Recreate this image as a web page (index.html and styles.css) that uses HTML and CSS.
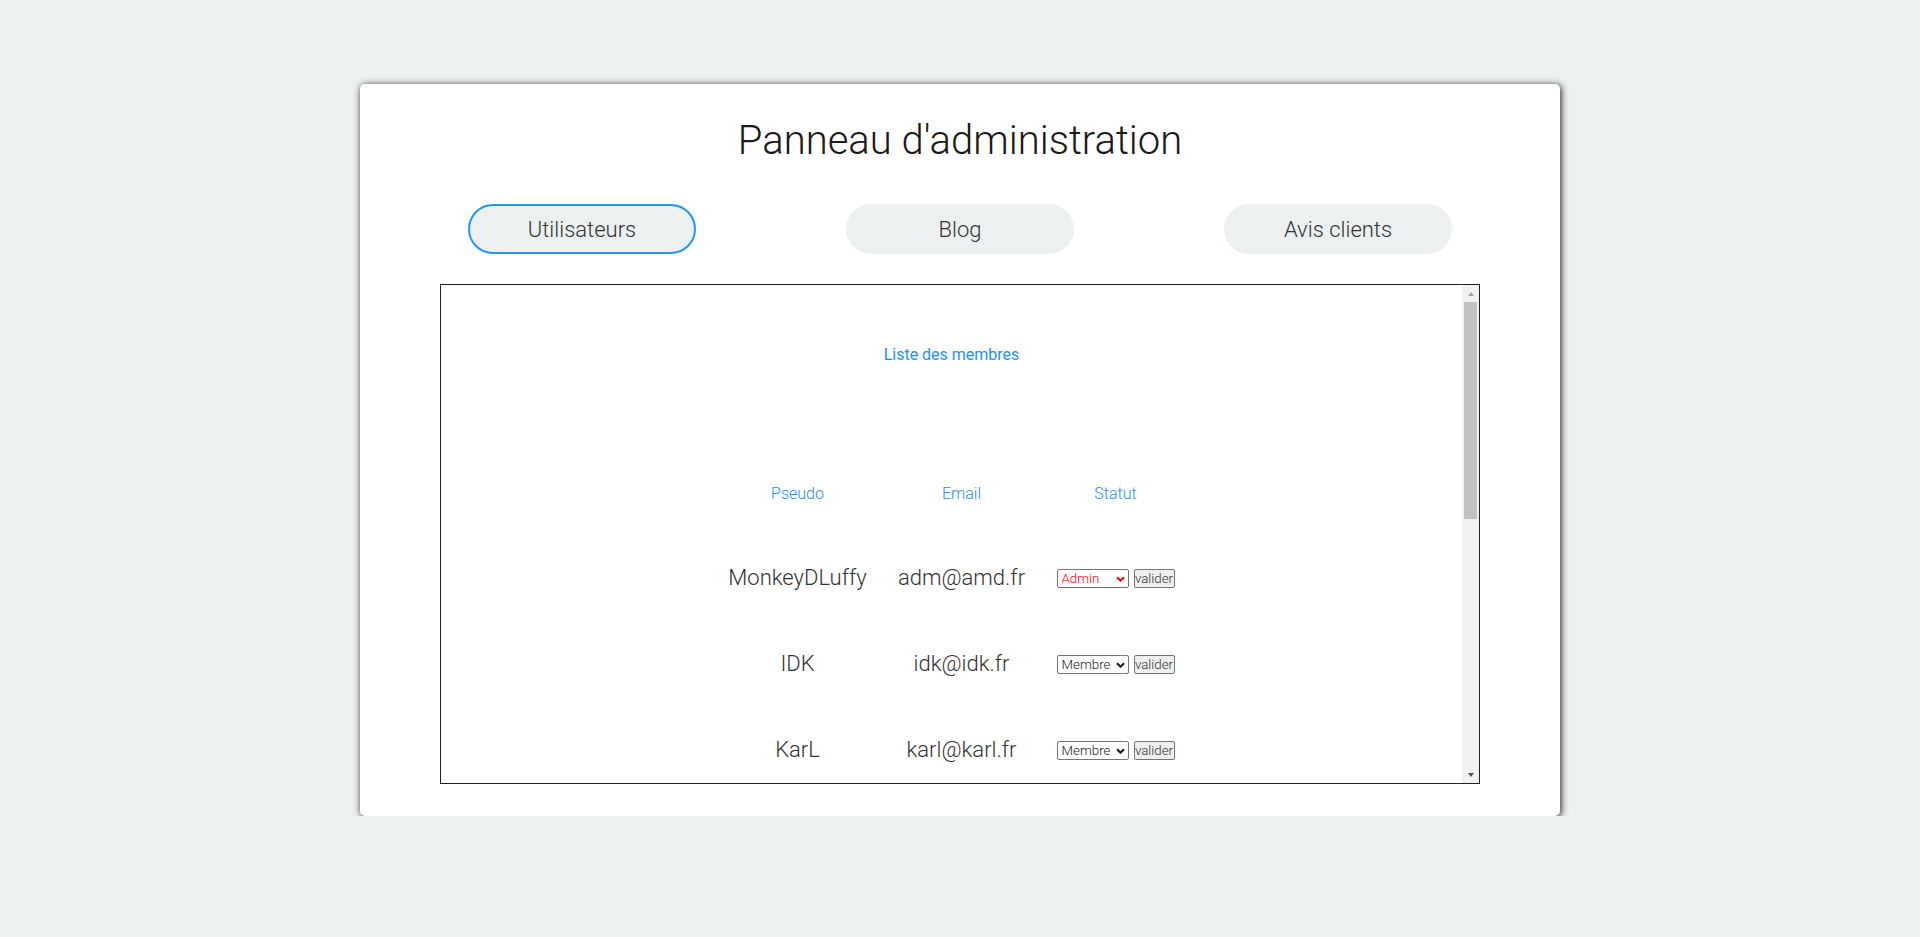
FILE: index.html
```html
<!DOCTYPE html>
<html lang="fr">
<head>
<meta charset="utf-8">
<title>Panneau d'administration</title>
<link rel="stylesheet" href="styles.css">
</head>
<body>
<div class="panel">
  <h1 class="panel-title">Panneau d'administration</h1>
  <nav class="tabs">
    <button class="tab tab-active">Utilisateurs</button>
    <button class="tab">Blog</button>
    <button class="tab">Avis clients</button>
  </nav>
  <div class="box">
    <div class="box-scroll">
      <p class="list-title">Liste des membres</p>
      <table class="members">
        <colgroup>
          <col class="col-pseudo">
          <col class="col-email">
          <col class="col-statut">
        </colgroup>
        <thead>
          <tr><th>Pseudo</th><th>Email</th><th>Statut</th></tr>
        </thead>
        <tbody>
          <tr>
            <td>MonkeyDLuffy</td>
            <td>adm@amd.fr</td>
            <td><form class="status"><span class="sel-wrap sel-admin"><select class="sel"><option>Admin</option><option>Membre</option></select><svg class="sel-arrow" viewBox="0 0 9 6"><path d="M1 1.2l3.5 3.5 3.5-3.5" fill="none" stroke="currentColor" stroke-width="2.1"/></svg></span><button type="button" class="validate">valider</button></form></td>
          </tr>
          <tr>
            <td>IDK</td>
            <td>idk@idk.fr</td>
            <td><form class="status"><span class="sel-wrap"><select class="sel"><option>Membre</option><option>Admin</option></select><svg class="sel-arrow" viewBox="0 0 9 6"><path d="M1 1.2l3.5 3.5 3.5-3.5" fill="none" stroke="currentColor" stroke-width="2.1"/></svg></span><button type="button" class="validate">valider</button></form></td>
          </tr>
          <tr>
            <td>KarL</td>
            <td>karl@karl.fr</td>
            <td><form class="status"><span class="sel-wrap"><select class="sel"><option>Membre</option><option>Admin</option></select><svg class="sel-arrow" viewBox="0 0 9 6"><path d="M1 1.2l3.5 3.5 3.5-3.5" fill="none" stroke="currentColor" stroke-width="2.1"/></svg></span><button type="button" class="validate">valider</button></form></td>
          </tr>
        </tbody>
      </table>
    </div>
    <div class="scrollbar" aria-hidden="true">
      <span class="sb-btn"><span class="sb-arrow-up"></span></span>
      <div class="sb-track"><span class="sb-thumb"></span></div>
      <span class="sb-btn"><span class="sb-arrow-down"></span></span>
    </div>
  </div>
</div>
</body>
</html>
```
FILE: styles.css
```css
* {
  box-sizing: border-box;
}

html, body {
  margin: 0;
  padding: 0;
}

body {
  background: #ecf0f1;
  font-family: Roboto, "Liberation Sans", sans-serif;
  padding-top: 84px;
}

.panel {
  width: 1200px;
  margin: 0 auto;
  background: #ffffff;
  border-radius: 5px;
  box-shadow: 1px 1px 7px rgba(0, 0, 0, 0.9);
  padding: 32px 80px 32px;
}

.panel-title {
  margin: 0;
  font-family: Roboto, "Liberation Sans", sans-serif;
  font-weight: 300;
  font-size: 40px;
  line-height: 49px;
  text-align: center;
  color: #1a1a1a;
}

.tabs {
  display: flex;
  justify-content: space-around;
  margin: 39px -47px 0;
}

.tab {
  width: 228px;
  height: 50px;
  border-radius: 25px;
  border: 2px solid transparent;
  background: #ecf0f1;
  font-family: Roboto, "Liberation Sans", sans-serif;
  font-weight: 300;
  font-size: 22px;
  color: #333;
  padding: 0;
  cursor: pointer;
}

.tab-active {
  border-color: #2196f3;
}

.box {
  display: flex;
  margin-top: 30px;
  width: 1040px;
  height: 500px;
  border: 1px solid #222;
}

.box-scroll {
  flex: 1;
  min-width: 0;
  overflow-y: auto;
  scrollbar-width: none;
}

.scrollbar {
  width: 17px;
  flex: none;
  display: flex;
  flex-direction: column;
  background: #f1f1f1;
}

.sb-btn {
  height: 17px;
  flex: none;
  display: flex;
  align-items: center;
  justify-content: center;
}

.sb-arrow-up {
  width: 0;
  height: 0;
  border-left: 3.5px solid transparent;
  border-right: 3.5px solid transparent;
  border-bottom: 4px solid #a3a3a3;
}

.sb-arrow-down {
  width: 0;
  height: 0;
  border-left: 3.5px solid transparent;
  border-right: 3.5px solid transparent;
  border-top: 4px solid #505050;
}

.sb-track {
  flex: 1;
  padding: 0 2px;
}

.sb-thumb {
  display: block;
  height: 217px;
  background: #c1c1c1;
}

.list-title {
  margin: 0;
  padding-top: 60px;
  font-size: 16px;
  line-height: 19px;
  font-weight: 400;
  color: #1e90ff;
  text-align: center;
}

.members {
  margin: 88px auto 0;
  width: 477px;
  table-layout: fixed;
  border-collapse: collapse;
}

.col-pseudo { width: 169px; }
.col-email { width: 159px; }
.col-statut { width: 149px; }

.members th {
  height: 82px;
  padding: 0;
  font-weight: 300;
  font-size: 16px;
  color: #1e90ff;
  text-align: center;
  vertical-align: middle;
}

.members td {
  height: 86px;
  padding: 0;
  font-weight: 300;
  font-size: 22px;
  color: #333;
  text-align: center;
  vertical-align: middle;
  white-space: nowrap;
}

.status {
  display: inline-flex;
  align-items: center;
  gap: 5px;
  margin: 0;
  vertical-align: middle;
}

.sel-wrap {
  position: relative;
  display: inline-flex;
  color: #1a1a1a;
}

.sel-admin {
  color: #ff0000;
}

.sel {
  appearance: none;
  -webkit-appearance: none;
  width: 72px;
  height: 19px;
  font-family: Roboto, "Liberation Sans", sans-serif;
  font-weight: 300;
  font-size: 13.33px;
  line-height: 17px;
  color: inherit;
  border: 1px solid #767676;
  border-radius: 2px;
  background: #fff;
  padding: 0 0 0 4px;
  margin: 0;
}

.sel-arrow {
  position: absolute;
  right: 4px;
  top: 7px;
  width: 9px;
  height: 6px;
  pointer-events: none;
}

.validate {
  width: 41px;
  height: 19px;
  font-family: Roboto, "Liberation Sans", sans-serif;
  font-weight: 300;
  font-size: 13.33px;
  color: #333;
  background: #efefef;
  border: 1px solid #767676;
  border-radius: 2px;
  padding: 0;
  margin: 0;
}
```
